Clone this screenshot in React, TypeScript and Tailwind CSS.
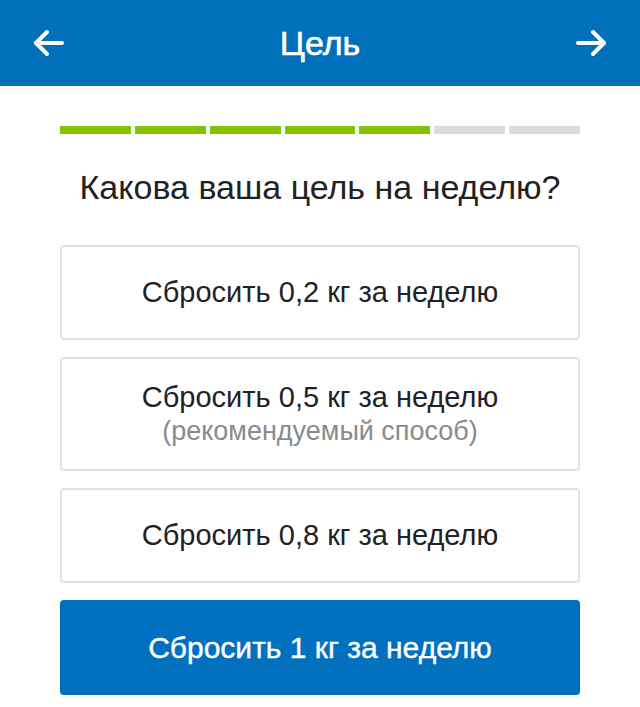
import React from "react";

const Arrow = ({ dir }: { dir: "left" | "right" }) => (
  <svg width="34" height="30" viewBox="0 0 34 30" fill="none" stroke="white" strokeWidth="4" strokeLinecap="round" strokeLinejoin="round">
    {dir === "left" ? (
      <>
        <path d="M4 15 H30" />
        <path d="M15 4 L4 15 L15 26" />
      </>
    ) : (
      <>
        <path d="M30 15 H4" />
        <path d="M19 4 L30 15 L19 26" />
      </>
    )}
  </svg>
);

export default function App() {
  const segs = [1, 1, 1, 1, 1, 0, 0];
  return (
    <div className="w-[640px] h-[707px] bg-white overflow-hidden relative" style={{ fontFamily: '"Liberation Sans", Arial, sans-serif' }}>
      <div className="h-[86px] bg-[#0070bb] flex items-center justify-between px-[32px]">
        <Arrow dir="left" />
        <div className="text-white text-[34px] leading-[40px] [-webkit-text-stroke:0.6px_white]">Цель</div>
        <Arrow dir="right" />
      </div>
      <div className="px-[60px] pt-[40px]">
        <div className="flex gap-[4px]">
          {segs.map((s, i) => (
            <div key={i} className={s ? "h-[8px] flex-1 bg-[#84c100]" : "h-[8px] flex-1 bg-[#dcdcdc]"} />
          ))}
        </div>
        <div className="text-center text-[34px] text-[#222] mt-[33px] leading-[40px]">Какова ваша цель на неделю?</div>
        <div className="mt-[38px] flex flex-col gap-[17px] relative">
          <div className="h-[95px] border-2 border-[#e2e2e2] rounded-[4px] flex items-center justify-center text-[29px] text-[#222]">Сбросить 0,2 кг за неделю</div>
          <div className="h-[114px] border-2 border-[#e2e2e2] rounded-[4px] flex flex-col items-center justify-center">
            <div className="text-[29px] text-[#222] leading-[34px]">Сбросить 0,5 кг за неделю</div>
            <div className="text-[27px] text-[#8a8a8a] leading-[34px]">(рекомендуемый способ)</div>
          </div>
          <div className="h-[95px] border-2 border-[#e2e2e2] rounded-[4px] flex items-center justify-center text-[29px] text-[#222]">Сбросить 0,8 кг за неделю</div>
          <div className="h-[95px] bg-[#0070bf] rounded-[4px] flex items-center justify-center text-[30px] text-white [-webkit-text-stroke:0.4px_white]">Сбросить 1 кг за неделю</div>
          <div className="absolute left-0 right-0 top-[146px] flex flex-col items-center text-[38px] leading-[38px] text-black/[0.02] pointer-events-none">
            <div>Уверены?</div>
            <div className="mt-[20px]">Вначале Вы можете</div>
            <div>поставить себе менее</div>
            <div>амбициозную цель</div>
          </div>
        </div>
      </div>
    </div>
  );
}
